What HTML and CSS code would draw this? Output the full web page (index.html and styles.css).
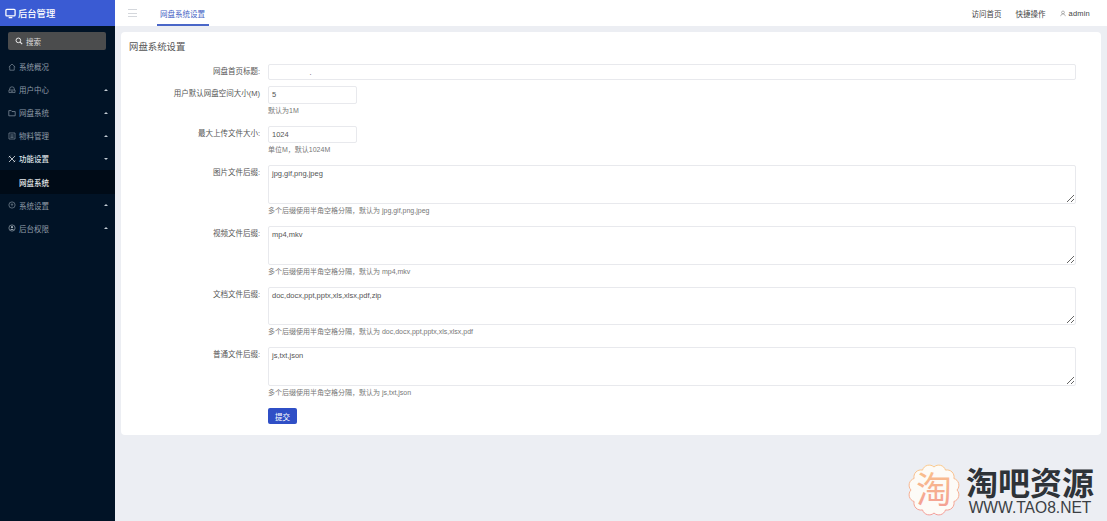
FILE: index.html
```html
<!DOCTYPE html>
<html lang="zh-CN">
<head>
<meta charset="utf-8">
<title>网盘系统设置</title>
<link rel="stylesheet" href="styles.css">
</head>
<body>
<div class="app">
  <aside class="sidebar">
    <div class="brand">
      <svg class="brand-icon" viewBox="0 0 12 12"><rect x="1" y="1.5" width="10" height="7" rx="1" fill="none" stroke="#fff" stroke-width="1.4"/><path d="M4 10.5h4" stroke="#fff" stroke-width="1.4"/></svg>
      <span>后台管理</span>
    </div>
    <div class="search">
      <svg class="search-icon" viewBox="0 0 10 10"><circle cx="4.2" cy="4.2" r="2.9" fill="none" stroke="#eee" stroke-width="1.2"/><path d="M6.4 6.4L9 9" stroke="#eee" stroke-width="1.4"/></svg>
      <span>搜索</span>
    </div>
    <nav class="menu">
      <a class="item"><svg class="ico" viewBox="0 0 10 10"><path d="M1 5l4-3.7L9 5M2.2 4.2V9h5.6V4.2" fill="none" stroke="#8a97a3" stroke-width=".8"/></svg><span class="lbl">系统概况</span></a>
      <a class="item"><svg class="ico" viewBox="0 0 10 10"><path d="M2 5V4a3 3 0 016 0v1M1.2 5h7.6v3.2H1.2zM3.5 6.6h3" fill="none" stroke="#8a97a3" stroke-width=".8"/></svg><span class="lbl">用户中心</span><i class="caret"></i></a>
      <a class="item"><svg class="ico" viewBox="0 0 10 10"><path d="M1 2h3l1 1.2h4V8.5H1z" fill="none" stroke="#8a97a3" stroke-width=".9"/></svg><span class="lbl">网盘系统</span><i class="caret"></i></a>
      <a class="item"><svg class="ico" viewBox="0 0 10 10"><path d="M1.2 1.2h7.6v7.6H1.2zM3 3.6h4M3 5.2h4M3 6.8h4" fill="none" stroke="#8a97a3" stroke-width=".8"/></svg><span class="lbl">物料管理</span><i class="caret"></i></a>
      <a class="item item-open"><svg class="ico" viewBox="0 0 10 10"><path d="M1.2 1.2l7.6 7.6M8.8 1.2L1.2 8.8M1 3l2-2M7 9l2-2" fill="none" stroke="#e6e9ec" stroke-width="1"/></svg><span class="lbl">功能设置</span><i class="caret caret-down"></i></a>
      <a class="sub">网盘系统</a>
      <a class="item"><svg class="ico" viewBox="0 0 10 10"><circle cx="5" cy="5" r="3.9" fill="none" stroke="#8a97a3" stroke-width=".8"/><path d="M3.4 4h3.2M5 4v2.6" fill="none" stroke="#8a97a3" stroke-width=".8"/></svg><span class="lbl">系统设置</span><i class="caret"></i></a>
      <a class="item"><svg class="ico" viewBox="0 0 10 10"><circle cx="5" cy="5" r="3.9" fill="none" stroke="#a3aeb8" stroke-width=".8"/><circle cx="5" cy="4" r="1.4" fill="#a3aeb8"/><path d="M2.6 7.6a2.6 2 0 014.8 0z" fill="#a3aeb8"/></svg><span class="lbl">后台权限</span><i class="caret"></i></a>
    </nav>
  </aside>
  <div class="main">
    <header class="topbar">
      <div class="burger"><i></i><i></i><i></i></div>
      <div class="tab">网盘系统设置</div>
      <div class="top-right">
        <span>访问首页</span>
        <span>快捷操作</span>
        <span class="user"><svg class="user-icon" viewBox="0 0 8 8"><circle cx="4" cy="2.6" r="1.9" fill="none" stroke="#777" stroke-width=".7"/><path d="M1 7.6c.2-2 1.3-3 3-3s2.800 1 3 3" fill="none" stroke="#777" stroke-width=".7"/></svg><b>admin</b></span>
      </div>
    </header>
    <main class="content">
      <section class="card">
        <h1 class="card-title">网盘系统设置</h1>
        <form class="form">
          <div class="row row-first">
            <label class="label">网盘首页标题:</label>
            <div class="field"><input class="input input-wide" type="text" value="                  ."></div>
          </div>
          <div class="row">
            <label class="label">用户默认网盘空间大小(M)</label>
            <div class="field"><input class="input input-short" type="text" value="5"><p class="help">默认为1M</p></div>
          </div>
          <div class="row">
            <label class="label">最大上传文件大小:</label>
            <div class="field"><input class="input input-short" type="text" value="1024"><p class="help">单位M，默认1024M</p></div>
          </div>
          <div class="row">
            <label class="label">图片文件后缀:</label>
            <div class="field"><textarea class="area">jpg,gif,png,jpeg</textarea><p class="help">多个后缀使用半角空格分隔，默认为 jpg,gif,png,jpeg</p></div>
          </div>
          <div class="row">
            <label class="label">视频文件后缀:</label>
            <div class="field"><textarea class="area">mp4,mkv</textarea><p class="help">多个后缀使用半角空格分隔，默认为 mp4,mkv</p></div>
          </div>
          <div class="row">
            <label class="label">文档文件后缀:</label>
            <div class="field"><textarea class="area">doc,docx,ppt,pptx,xls,xlsx,pdf,zip</textarea><p class="help">多个后缀使用半角空格分隔，默认为 doc,docx,ppt,pptx,xls,xlsx,pdf</p></div>
          </div>
          <div class="row">
            <label class="label">普通文件后缀:</label>
            <div class="field"><textarea class="area">js,txt,json</textarea><p class="help">多个后缀使用半角空格分隔，默认为 js,txt,json</p></div>
          </div>
          <div class="row">
            <div class="label"></div>
            <div class="field"><button class="submit" type="button">提交</button></div>
          </div>
        </form>
      </section>
    </main>
  </div>
</div>
<div class="mark">
  <svg class="mark-badge" viewBox="0 0 52 52">
    <defs><linearGradient id="mg" x1="0" y1="0" x2="0" y2="1"><stop offset="0" stop-color="#fbc98a"/><stop offset="1" stop-color="#f39a96"/></linearGradient></defs>
    <path d="M49 26A7 7 0 0 1 45.900 37.500A7 7 0 0 1 37.500 45.900A7 7 0 0 1 26 49A7 7 0 0 1 14.500 45.900A7 7 0 0 1 6.100 37.500A7 7 0 0 1 3 26A7 7 0 0 1 6.100 14.500A7 7 0 0 1 14.500 6.100A7 7 0 0 1 26 3A7 7 0 0 1 37.500 6.100A7 7 0 0 1 45.900 14.500A7 7 0 0 1 49 26Z" fill="#fdfbf7" stroke="url(#mg)" stroke-width="1"/>
    <text class="mark-glyph" x="26" y="39" text-anchor="middle" fill="url(#mg)">淘</text>
  </svg>
  <div class="mark-text">
    <div class="mark-cn">淘吧资源</div>
    <div class="mark-en">WWW.TAO8.NET</div>
  </div>
</div>
</body>
</html>
```
FILE: styles.css
```css
* { box-sizing: border-box; }
html, body { margin: 0; padding: 0; height: 100%; overflow: hidden; }
body {
  font-family: "Liberation Sans", "Noto Sans CJK SC", sans-serif;
  font-size: 7.5px;
  color: #555;
  background: #eceef3;
  position: relative;
}
.app { display: flex; height: 521px; }

.sidebar { width: 115px; flex: none; background: #011326; color: #8f9ba6; }
.brand {
  height: 26px; background: #3a5bd3; color: #fff;
  display: flex; align-items: center; padding-left: 5px; gap: 2px;
  font-size: 9.3px; font-weight: 500;
}
.brand-icon { width: 11px; height: 11px; }
.search {
  margin: 6px 9px 0 8px; height: 18px; background: #4b4c4d; border-radius: 2px;
  display: flex; align-items: center; padding-left: 7px; gap: 3px; color: #ddd;
}
.search-icon { width: 8px; height: 8px; }
.menu { margin-top: 5px; }
.item, .sub { height: 23.100px; display: flex; align-items: center; }
.item { padding-left: 8px; }
.ico { width: 8px; height: 8px; margin-right: 3px; flex: none; }
.lbl { flex: 1; }
.caret {
  width: 0; height: 0; margin-right: 7px;
  border-left: 2px solid transparent; border-right: 2px solid transparent;
  border-bottom: 2px solid #c4ccd3;
}
.caret-down { border-bottom: 0; border-top: 2px solid #c4ccd3; }
.item-open { color: #dfe3e7; }
.item-open .lbl { font-weight: 500; }
.sub { padding-left: 19px; background: #000b17; color: #e8ebee; font-weight: 500; }

.main { flex: 1; min-width: 0; display: flex; flex-direction: column; }
.topbar {
  height: 26px; background: #fff; flex: none;
  display: flex; align-items: center; padding: 0 17px 0 13px;
}
.burger { width: 9px; display: flex; flex-direction: column; gap: 2.400px; }
.burger i { display: block; height: 1px; background: #d4d7dc; }
.tab {
  margin-left: 20px; height: 26px; padding: 8px 3px 0; width: 52px;
  color: #4462c4; border-bottom: 2px solid #4a67c8; white-space: nowrap;
}
.top-right { margin-left: auto; display: flex; align-items: center; gap: 14px; color: #444; }
.user { display: flex; align-items: center; gap: 3px; }
.user b { font-weight: 500; font-size: 7.5px; letter-spacing: .2px; }
.user-icon { width: 6px; height: 7px; }

.content { padding: 6px 6px 0; flex: 1; }
.card { background: #fff; border-radius: 4px; padding: 9px 25px 11px 8px; }
.card-title { margin: 0 0 12px; font-size: 9.400px; line-height: 11px; font-weight: 400; color: #555; }
.form { display: flex; flex-direction: column; gap: 10px; }
.row { display: flex; align-items: flex-start; }
.row-first { margin-bottom: -4px; }
.label {
  width: 131px; flex: none; margin-right: 8px; text-align: right; color: #555;
  padding-top: 3px; line-height: 10px; white-space: nowrap;
}
.field { flex: 1; min-width: 0; }
.input, .area {
  display: block; border: 1px solid #e8e9ed; border-radius: 2px; background: #fff;
  font-family: "Liberation Sans", "Noto Sans CJK SC", sans-serif;
  font-size: 7.5px; color: #555; outline: none; padding: 0 3px;
}
.input { height: 17.500px; }
.input-wide { width: 100%; height: 16px; white-space: pre; }
.input-short { width: 89px; }
.area { width: 100%; height: 38.750px; padding: 3px; line-height: 10px; resize: vertical; }
.help { margin: 2px 0 0; line-height: 10px; font-size: 7px; color: #777; }
.submit {
  display: block; width: 29px; height: 16px; padding: 0; border: 0; border-radius: 2px;
  background: #2f4fc6; color: #fff; font: inherit;
}

.mark { position: absolute; right: 13px; bottom: 5px; display: flex; align-items: flex-end; gap: 6px; }
.mark-badge { width: 52px; height: 52px; }
.mark-glyph { font-family: "Noto Sans CJK SC", sans-serif; font-size: 36px; }
.mark-text { display: flex; flex-direction: column; align-items: center; }
.mark-cn {
  font-family: "Noto Sans CJK SC", sans-serif; font-weight: 700; font-size: 32px; line-height: 38px;
  color: #2e3338; white-space: nowrap;
}
.mark-en { font-size: 15.600px; line-height: 16px; color: #3b3f44; white-space: nowrap; }
```
